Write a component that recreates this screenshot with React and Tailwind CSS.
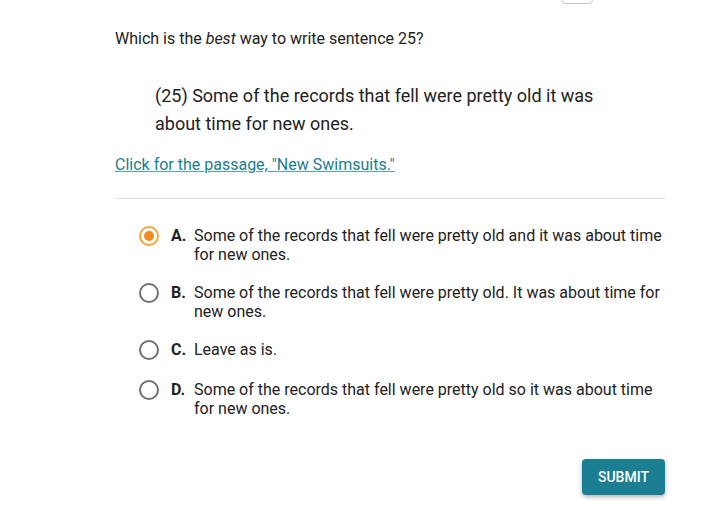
import React, { useState } from 'react';

const options = [
    { key: 'A', text: 'Some of the records that fell were pretty old and it was about time for new ones.' },
    { key: 'B', text: 'Some of the records that fell were pretty old. It was about time for new ones.' },
    { key: 'C', text: 'Leave as is.' },
    { key: 'D', text: 'Some of the records that fell were pretty old so it was about time for new ones.' },
];

const Radio = ({ checked }) => (
    <span
        className={`flex h-[20px] w-[20px] shrink-0 items-center justify-center rounded-full border-2 ${checked ? 'border-[#f5a53a]' : 'border-[#707070]'}`}
    >
        {checked && <span className="h-[10px] w-[10px] rounded-full bg-[#f28b1e]" />}
    </span>
);

const App = () => {
    const [selected, setSelected] = useState('A');

    return (
        <div className="relative min-h-[527px] w-[725px] bg-white font-['Roboto',sans-serif] text-[#222]">
            <div className="absolute left-[561px] top-[-4px] h-[8px] w-[32px] rounded-full border border-[#c8c8c8] bg-white" />

            <div className="ml-[115px] w-[550px] pt-[29px]">
                <p className="text-[16px] leading-[19px]">
                    Which is the <em>best</em> way to write sentence 25?
                </p>

                <p className="ml-[40px] mt-[34px] w-[460px] text-[18px] leading-[28px]">
                    (25) Some of the records that fell were pretty old it was about time for new ones.
                </p>

                <a href="#" className="mt-[17px] inline-block text-[16px] leading-[19px] text-[#1d7d8c] underline decoration-[#5aa3ad]">
                    Click for the passage, "New Swimsuits."
                </a>

                <div className="mt-[21px] border-t border-[#dedede]" />

                <div className="mt-[27px] flex flex-col gap-[19px] pl-[24px]">
                    {options.map(o => (
                        <label
                            key={o.key}
                            onClick={() => setSelected(o.key)}
                            className="flex min-h-[21px] cursor-pointer items-start text-[16px] leading-[19px]"
                        >
                            <Radio checked={selected === o.key} />
                            <span className="ml-[12px] w-[23px] shrink-0 font-bold">{o.key}.</span>
                            <span>{o.text}</span>
                        </label>
                    ))}
                </div>

                <div className="mt-[41px] flex justify-end">
                    <button className="h-[36px] w-[83px] rounded-[4px] bg-[#1b7e92] text-[14px] font-medium text-white shadow-[0_2px_4px_rgba(0,0,0,0.3)]">
                        SUBMIT
                    </button>
                </div>
            </div>
        </div>
    );
};

export default App;
